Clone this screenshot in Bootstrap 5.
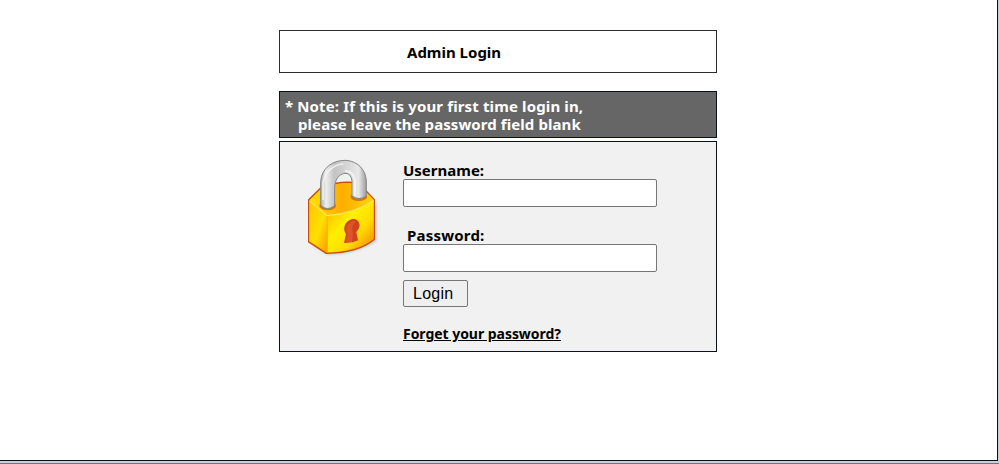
<!DOCTYPE html>
<html lang="en">
<head>
<meta charset="utf-8">
<meta name="viewport" content="width=device-width, initial-scale=1">
<title>Admin Login</title>
<link href="https://cdn.jsdelivr.net/npm/bootstrap@5.3.0/dist/css/bootstrap.min.css" rel="stylesheet">
<style>
body{height:464px;overflow:hidden;background:#c9ced7;color:#000;font:700 15px/18px "Noto Sans","DejaVu Sans",sans-serif;border-bottom:1px solid #70747c}
.page-frame{width:998px;height:461px;border-right:1px solid #07111f;border-bottom:1px solid #07111f;background:#fff;padding:30px 0 0 279px}
.login-wrap{width:438px}
.title-box{height:43px;border:1px solid #2b2b30;padding:1px 0 0 127px}
.note-box{height:47px;margin-top:18px;border:1px solid #07111f;background:#666;color:#fff;padding:5px 0 0 5px}
.note-indent{padding-left:13px}
.note-first{letter-spacing:.13px}
.note-second{letter-spacing:.08px}
.form-box{height:211px;margin-top:3px;border:1px solid #07111f;background:#f1f1f1}
.lock-col{width:123px;padding:8px 0 0 15px}
.fields{padding-top:19px}
.fields label{height:18px}
.fields .form-control{width:254px;height:28px;border:1px solid #767676;border-radius:2px;background:#fff}
.second{margin-top:19px}
.second label{padding-left:4px;letter-spacing:.2px}
.login-btn{width:65px;height:27px;margin-top:8px;border:1px solid #767676;border-radius:2px;background:#efefef;color:#000;font:400 16px/25px "Liberation Sans",Arial,sans-serif;padding:0 0 0 9px;letter-spacing:.25px}
.forgot{margin-top:18px;color:#000;font-size:14px;letter-spacing:-.04px}
.txt{display:block;height:18px;line-height:18px;white-space:nowrap;overflow:hidden}
</style>
<script src="https://cdn.jsdelivr.net/npm/bootstrap@5.3.0/dist/js/bootstrap.bundle.min.js"></script>
</head>
<body>
<main class="page-frame">
<div class="login-wrap d-flex flex-column">
<div class="title-box d-flex align-items-center"><span class="txt">Admin Login</span></div>
<div class="note-box"><div class="txt note-first">* Note: If this is your first time login in,</div><div class="txt note-indent note-second">please leave the password field blank</div></div>
<form class="form-box d-flex">
<div class="lock-col flex-shrink-0">
<svg class="d-block" width="95" height="115" viewBox="0 0 285 345" aria-hidden="true">
<defs>
<linearGradient id="left" x1="0" y1="0" x2="1" y2="1"><stop offset="0" stop-color="#ffc400"/><stop offset=".55" stop-color="#ffe000"/><stop offset="1" stop-color="#f99a00"/></linearGradient>
<linearGradient id="front" x1="0" y1="0" x2="1" y2="1"><stop offset="0" stop-color="#ffa800"/><stop offset=".4" stop-color="#fff000"/><stop offset=".65" stop-color="#ffdc00"/><stop offset="1" stop-color="#f07c00"/></linearGradient>
<linearGradient id="top" x1="0" y1="0" x2="1" y2="0"><stop offset="0" stop-color="#ffe000"/><stop offset=".5" stop-color="#ffae00"/><stop offset="1" stop-color="#ffd400"/></linearGradient>
<linearGradient id="metal" gradientUnits="userSpaceOnUse" x1="76" y1="0" x2="216" y2="0"><stop offset="0" stop-color="#aaa"/><stop offset=".12" stop-color="#eee"/><stop offset=".3" stop-color="#c3c3c3"/><stop offset=".6" stop-color="#d8d8d8"/><stop offset=".82" stop-color="#e8e8e8"/><stop offset="1" stop-color="#969696"/></linearGradient>
<filter id="soft" x="-20%" y="-20%" width="140%" height="140%"><feGaussianBlur stdDeviation="4"/></filter>
</defs>
<path d="M50 282L98 313Q185 310 243 272V160Z" fill="#777" opacity=".5" filter="url(#soft)"/>
<path d="M41 149L80 111Q135 91 191 99L238 149V268Q190 309 94 310L41 276Z" fill="#f6a500" stroke="#c64f10" stroke-width="4" stroke-linejoin="round"/>
<path d="M44 151L81 114Q137 94 189 101L236 150Q180 190 97 196Z" fill="url(#top)"/>
<path d="M43 152L97 196V307L43 273Z" fill="url(#left)"/>
<path d="M97 196Q178 190 236 151V266Q184 304 97 307Z" fill="url(#front)"/>
<path d="M44 153L97 197Q180 190 236 152" fill="none" stroke="#ffe850" stroke-width="4"/>
<path d="M97 199V307" stroke="#ffb300" stroke-width="3"/>
<ellipse cx="98" cy="167" rx="25" ry="14" fill="#cf7610"/>
<ellipse cx="191" cy="140" rx="25" ry="13" fill="#cf7610"/>
<path d="M77 166V95C80 51 116 30 153 31C190 34 214 61 214 96V138Q192 153 171 138V93Q169 70 150 70C130 72 119 91 119 115V167Q97 185 77 166Z" fill="url(#metal)" stroke="#858585" stroke-width="3"/>
<path d="M84 148V99C90 64 116 45 143 42" fill="none" stroke="#fafafa" stroke-width="5" stroke-linecap="round" opacity=".75"/>
<path d="M180 137V91Q175 63 150 62" fill="none" stroke="#f7f7f7" stroke-width="6" opacity=".8"/>
<path d="M153 252C143 239 148 219 163 211C178 202 193 210 194 226Q193 238 184 246L189 271Q172 279 147 279Z" fill="#cf431f"/>
<path d="M157 252C151 238 156 223 166 217Q176 211 184 213Q166 227 174 248L171 275L152 278Z" fill="#ed6637" opacity=".5"/>
</svg>
</div>
<div class="fields d-flex flex-column align-items-start">
<label for="user" class="txt">Username:</label>
<input id="user" type="text" class="form-control">
<div class="second d-flex flex-column"><label for="pass" class="txt">Password:</label>
<input id="pass" type="password" class="form-control"></div>
<button type="button" class="login-btn text-start">Login</button>
<a class="forgot txt text-decoration-underline" href="#">Forget your password?</a>
</div>
</form>
</div>
</main>
</body>
</html>
